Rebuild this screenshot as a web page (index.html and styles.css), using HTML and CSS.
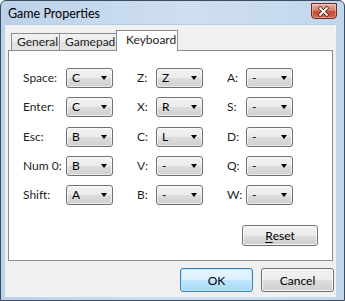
FILE: index.html
```html
<!DOCTYPE html>
<html>
<head>
<meta charset="utf-8">
<link rel="stylesheet" href="styles.css">
</head>
<body>
<div class="window">
  <div class="titlebar">
    <span class="title">Game Properties</span>
    <div class="close">
      <svg width="26" height="15" viewBox="0 0 26 15">
        <path d="M9.5 4 L16.5 11 M16.5 4 L9.5 11" stroke="#5a2018" stroke-width="3.6" stroke-linecap="square" fill="none"/>
        <path d="M9.5 4 L16.5 11 M16.5 4 L9.5 11" stroke="#ffffff" stroke-width="2" stroke-linecap="square" fill="none"/>
      </svg>
    </div>
  </div>
  <div class="client">
    <div class="tabs">
      <div class="tab first">General</div>
      <div class="tab">Gamepad</div>
      <div class="tab active">Keyboard</div>
    </div>
    <div class="page">
      <div class="grid">
        <span class="lbl">Space:</span><div class="combo"><span>C</span><i class="arrow"></i></div>
        <span class="lbl">Z:</span><div class="combo"><span>Z</span><i class="arrow"></i></div>
        <span class="lbl">A:</span><div class="combo"><span>-</span><i class="arrow"></i></div>

        <span class="lbl">Enter:</span><div class="combo"><span>C</span><i class="arrow"></i></div>
        <span class="lbl">X:</span><div class="combo"><span>R</span><i class="arrow"></i></div>
        <span class="lbl">S:</span><div class="combo"><span>-</span><i class="arrow"></i></div>

        <span class="lbl">Esc:</span><div class="combo"><span>B</span><i class="arrow"></i></div>
        <span class="lbl">C:</span><div class="combo"><span>L</span><i class="arrow"></i></div>
        <span class="lbl">D:</span><div class="combo"><span>-</span><i class="arrow"></i></div>

        <span class="lbl">Num 0:</span><div class="combo"><span>B</span><i class="arrow"></i></div>
        <span class="lbl">V:</span><div class="combo"><span>-</span><i class="arrow"></i></div>
        <span class="lbl">Q:</span><div class="combo"><span>-</span><i class="arrow"></i></div>

        <span class="lbl">Shift:</span><div class="combo"><span>A</span><i class="arrow"></i></div>
        <span class="lbl">B:</span><div class="combo"><span>-</span><i class="arrow"></i></div>
        <span class="lbl">W:</span><div class="combo"><span>-</span><i class="arrow"></i></div>
      </div>
      <div class="reset-row">
        <div class="btn reset"><u>R</u>eset</div>
      </div>
    </div>
    <div class="footer">
      <div class="btn ok">OK</div>
      <div class="btn">Cancel</div>
    </div>
  </div>
</div>
</body>
</html>
```
FILE: styles.css
```css
* { box-sizing: border-box; margin: 0; padding: 0; }
html, body { width: 345px; height: 301px; overflow: hidden; background: #fff; }
body {
  font-family: Lato, "Noto Sans", sans-serif;
  font-size: 12px;
  color: #1e1e1e;
}
.window {
  width: 345px;
  height: 301px;
  border: 1px solid #3b4c60;
  border-radius: 6px 6px 0 0;
  background: linear-gradient(90deg, #bcd1e9 0%, #cfdff1 55%, #c2d6ec 100%);
  display: flex;
  flex-direction: column;
  padding: 0 8px 3px 4px;
}
.titlebar {
  height: 23px;
  display: flex;
  align-items: flex-start;
  justify-content: space-between;
}
.title {
  margin-top: 5px;
  margin-left: 3px;
  font-size: 12.5px;
  color: #000;
}
.close {
  width: 26px;
  height: 16px;
  margin-top: 2px;
  margin-right: -1px;
  border: 1px solid #6a2b22;
  border-radius: 0 0 4px 4px;
  background: linear-gradient(#eab0a3 0%, #d9806d 45%, #c74a33 55%, #d2674d 100%);
  box-shadow: inset 0 0 0 1px rgba(255,255,255,0.35);
  display: flex;
  align-items: center;
  justify-content: center;
}
.close svg { display: block; margin-left: -1px; }
.client {
  flex: 1;
  background: #f0f0f0;
  border: 1px solid #eef3f9;
  border-top-color: #b6c9df;
  display: flex;
  flex-direction: column;
  padding: 5px 0 0 1px;
}
.tabs {
  display: flex;
  align-items: flex-end;
  height: 21px;
  margin-bottom: -1px;
  padding-left: 4px;
  position: relative;
  z-index: 1;
}
.tab {
  height: 17px;
  margin-bottom: 1px;
  border: 1px solid #898c95;
  border-bottom: none;
  background: linear-gradient(#f3f3f3 0%, #ebebeb 50%, #dedede 50%, #e5e5e5 100%);
  padding: 0 0 0 5px;
  line-height: 15px;
  white-space: nowrap;
  color: #1e1e1e;
}
.tab.first { width: 48px; border-right: none; }
.tab:nth-child(2) { width: 58px; }
.tab.active {
  height: 21px;
  margin-bottom: 0;
  margin-left: -1px;
  width: 62px;
  background: #fff;
  padding-left: 9px;
  line-height: 17px;
}
.page {
  width: 325px;
  height: 211px;
  margin-left: 1px;
  border: 1px solid #898c95;
  background: #fff;
  display: flex;
  flex-direction: column;
  padding: 17px 14px 14px 14px;
}
.grid {
  display: grid;
  grid-template-columns: 43px 71px 19px 71px 19px 47px;
  grid-auto-rows: 20px;
  row-gap: 9.3px;
  align-items: center;
}
.lbl { color: #1e1e1e; line-height: 20px; }
.combo {
  width: 47px;
  height: 20px;
  border: 1px solid #707070;
  border-radius: 3px;
  background: linear-gradient(#f2f2f2 0%, #ebebeb 50%, #dddddd 50%, #cfcfcf 100%);
  box-shadow: inset 0 0 0 1px rgba(255,255,255,0.6);
  display: flex;
  align-items: center;
  justify-content: space-between;
  padding: 0 5px 0 5px;
  color: #000;
}
.combo span { line-height: 18px; }
.arrow {
  width: 0;
  height: 0;
  border-left: 3.5px solid transparent;
  border-right: 3.5px solid transparent;
  border-top: 4px solid #000;
}
.reset-row {
  margin-top: auto;
  display: flex;
  justify-content: flex-end;
}
.btn {
  height: 22px;
  border: 1px solid #707070;
  border-radius: 3px;
  background: linear-gradient(#f2f2f2 0%, #ebebeb 50%, #dddddd 50%, #cfcfcf 100%);
  box-shadow: inset 0 0 0 1px rgba(252,252,252,0.8);
  display: flex;
  align-items: center;
  justify-content: center;
  color: #000;
}
.reset { width: 76px; height: 21px; }
.reset u { text-decoration-thickness: 1px; text-underline-offset: 2px; }
.footer {
  display: flex;
  justify-content: flex-end;
  gap: 8px;
  margin-top: 7px;
  padding-right: 1px;
}
.footer .btn { width: 73px; height: 24px; }
.btn.ok {
  border-color: #3c7fb1;
  background: linear-gradient(#eaf6fd 0%, #d9f0fc 50%, #bee6fd 50%, #a7d9f5 100%);
  box-shadow: inset 0 0 0 1px #c0e8fb;
}
```
